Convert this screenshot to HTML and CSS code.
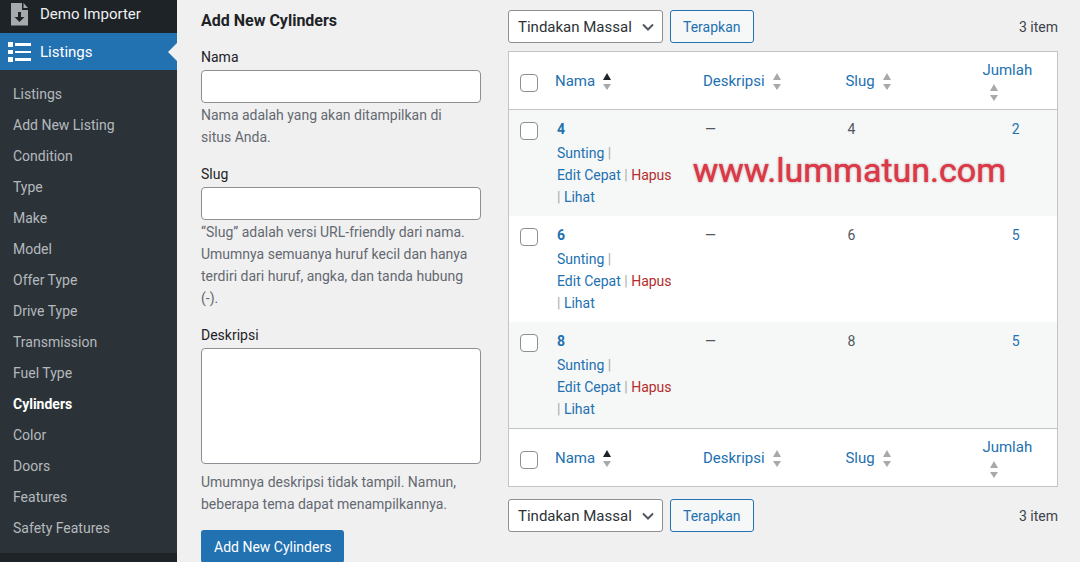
FILE: index.html
```
<!DOCTYPE html>
<html lang="id">
<head>
    <meta charset="UTF-8">
    <title>Cylinders</title>
    <link rel="stylesheet" href="styles.css">
</head>
<body>
<nav class="sidebar">
    <a href="#" class="menu-top">
        <svg class="menu-icon" viewBox="0 0 24 24"><path fill="#a7aaad" d="M3 1h11v7h6v15.500H3zM15.500 1l4.500 5h-4.500z"/><path fill="#1d2327" d="M10 10h3v5h3.500l-5 5-5-5H10z"/></svg>
        Demo Importer
    </a>
    <a href="#" class="menu-top current">
        <svg class="menu-icon" viewBox="0 0 24 24"><path fill="#fff" d="M0 2h5v5H0zM0 10h5v4H0zM0 17h5v5H0zM7 3h16v3H7zM7 11h16v2H7zM7 18h16v3H7z"/></svg>
        Listings
    </a>
    <ul class="submenu">
        <li><a href="#">Listings</a></li>
        <li><a href="#">Add New Listing</a></li>
        <li><a href="#">Condition</a></li>
        <li><a href="#">Type</a></li>
        <li><a href="#">Make</a></li>
        <li><a href="#">Model</a></li>
        <li><a href="#">Offer Type</a></li>
        <li><a href="#">Drive Type</a></li>
        <li><a href="#">Transmission</a></li>
        <li><a href="#">Fuel Type</a></li>
        <li><a href="#" class="active">Cylinders</a></li>
        <li><a href="#">Color</a></li>
        <li><a href="#">Doors</a></li>
        <li><a href="#">Features</a></li>
        <li><a href="#">Safety Features</a></li>
    </ul>
</nav>
<main class="content">
    <form class="add-form">
        <h2>Add New Cylinders</h2>
        <div class="field">
            <label for="tag-name">Nama</label>
            <input type="text" id="tag-name">
            <p>Nama adalah yang akan ditampilkan di situs Anda.</p>
        </div>
        <div class="field">
            <label for="tag-slug">Slug</label>
            <input type="text" id="tag-slug">
            <p>“Slug” adalah versi URL-friendly dari nama. Umumnya semuanya huruf kecil dan hanya terdiri dari huruf, angka, dan tanda hubung (-).</p>
        </div>
        <div class="field">
            <label for="tag-description">Deskripsi</label>
            <textarea id="tag-description"></textarea>
            <p class="after-area">Umumnya deskripsi tidak tampil. Namun, beberapa tema dapat menampilkannya.</p>
        </div>
        <button type="button" class="button-primary">Add New Cylinders</button>
    </form>
    <section class="list">
        <div class="tablenav">
            <div class="select">
                <select aria-label="Tindakan Massal"><option>Tindakan Massal</option></select>
                <svg viewBox="0 0 12 8"><path d="M1 1.500l5 5 5-5"/></svg>
            </div>
            <button type="button" class="button">Terapkan</button>
            <span class="count">3 item</span>
        </div>
        <div class="table-wrap">
            <table>
                <thead>
                    <tr>
                        <th class="check"><input type="checkbox" aria-label="Pilih Semua"></th>
                        <th class="name"><a href="#">Nama<svg class="sort asc" viewBox="0 0 10 18"><path class="up" d="M5 0l4 7H1z"/><path d="M5 17l4-6H1z"/></svg></a></th>
                        <th class="desc"><a href="#">Deskripsi<svg class="sort" viewBox="0 0 10 18"><path class="up" d="M5 0l4 7H1z"/><path d="M5 17l4-6H1z"/></svg></a></th>
                        <th class="slug"><a href="#">Slug<svg class="sort" viewBox="0 0 10 18"><path class="up" d="M5 0l4 7H1z"/><path d="M5 17l4-6H1z"/></svg></a></th>
                        <th><a href="#">Jumlah<svg class="sort" viewBox="0 0 10 18"><path class="up" d="M5 0l4 7H1z"/><path d="M5 17l4-6H1z"/></svg></a></th>
                    </tr>
                </thead>
                <tbody>
                    <tr>
                        <td class="check"><input type="checkbox" aria-label="Pilih 4"></td>
                        <td>
                            <a href="#" class="row-title">4</a>
                            <div class="row-actions"><a href="#">Sunting</a> |<br><a href="#">Edit Cepat</a> | <a href="#" class="delete">Hapus</a><br>| <a href="#">Lihat</a></div>
                        </td>
                        <td>—</td>
                        <td>4</td>
                        <td class="num"><a href="#">2</a></td>
                    </tr>
                    <tr>
                        <td class="check"><input type="checkbox" aria-label="Pilih 6"></td>
                        <td>
                            <a href="#" class="row-title">6</a>
                            <div class="row-actions"><a href="#">Sunting</a> |<br><a href="#">Edit Cepat</a> | <a href="#" class="delete">Hapus</a><br>| <a href="#">Lihat</a></div>
                        </td>
                        <td>—</td>
                        <td>6</td>
                        <td class="num"><a href="#">5</a></td>
                    </tr>
                    <tr>
                        <td class="check"><input type="checkbox" aria-label="Pilih 8"></td>
                        <td>
                            <a href="#" class="row-title">8</a>
                            <div class="row-actions"><a href="#">Sunting</a> |<br><a href="#">Edit Cepat</a> | <a href="#" class="delete">Hapus</a><br>| <a href="#">Lihat</a></div>
                        </td>
                        <td>—</td>
                        <td>8</td>
                        <td class="num"><a href="#">5</a></td>
                    </tr>
                </tbody>
                <tfoot>
                    <tr>
                        <th class="check"><input type="checkbox" aria-label="Pilih Semua"></th>
                        <th><a href="#">Nama<svg class="sort asc" viewBox="0 0 10 18"><path class="up" d="M5 0l4 7H1z"/><path d="M5 17l4-6H1z"/></svg></a></th>
                        <th><a href="#">Deskripsi<svg class="sort" viewBox="0 0 10 18"><path class="up" d="M5 0l4 7H1z"/><path d="M5 17l4-6H1z"/></svg></a></th>
                        <th><a href="#">Slug<svg class="sort" viewBox="0 0 10 18"><path class="up" d="M5 0l4 7H1z"/><path d="M5 17l4-6H1z"/></svg></a></th>
                        <th><a href="#">Jumlah<svg class="sort" viewBox="0 0 10 18"><path class="up" d="M5 0l4 7H1z"/><path d="M5 17l4-6H1z"/></svg></a></th>
                    </tr>
                </tfoot>
            </table>
            <div class="watermark">www.lummatun.com</div>
        </div>
        <div class="tablenav">
            <div class="select">
                <select aria-label="Tindakan Massal"><option>Tindakan Massal</option></select>
                <svg viewBox="0 0 12 8"><path d="M1 1.500l5 5 5-5"/></svg>
            </div>
            <button type="button" class="button">Terapkan</button>
            <span class="count">3 item</span>
        </div>
    </section>
</main>
</body>
</html>
```
FILE: styles.css
```
* {
    box-sizing: border-box;
}
body {
    display: flex;
    margin: 0;
    min-height: 100vh;
    background: #f0f0f0;
    color: #3c434a;
    font: 14px/22px Roboto, sans-serif;
}
a {
    color: #2271b1;
    text-decoration: none;
}
input, select, textarea, button {
    font: inherit;
}

/* sidebar */
.sidebar {
    flex: 0 0 177px;
    background: #1d2327;
}
.menu-top {
    position: relative;
    display: flex;
    align-items: center;
    gap: 8px;
    height: 37px;
    padding: 0 8px;
    color: #f0f0f1;
    font-size: 15px;
}
.menu-top:first-child {
    height: 33px;
    padding-bottom: 6px;
}
.menu-top.current {
    background: #2271b1;
    color: #fff;
}
.menu-top.current::after {
    content: "";
    position: absolute;
    right: 0;
    border: 9px solid transparent;
    border-right-color: #f0f0f0;
    border-left: 0;
}
.menu-icon {
    width: 24px;
    height: 24px;
}
.submenu {
    margin: 0;
    padding: 9px 0;
    background: #2c3338;
    list-style: none;
}
.submenu a {
    display: block;
    padding: 0 13px;
    line-height: 31px;
    color: #b4b9be;
}
.submenu .active {
    color: #fff;
    font-weight: bold;
}

.content {
    flex: 1;
    display: grid;
    grid-template-columns: 28fr 55fr;
    gap: 27px;
    align-items: start;
    padding: 10px 22px 0 24px;
}

/* form */
.add-form h2 {
    margin: 0 0 14px;
    font-size: 16px;
    line-height: 22px;
    color: #1d2327;
}
.field {
    margin-bottom: 15px;
}
.field label {
    display: block;
    margin-bottom: 2px;
    color: #1d2327;
}
.field input, .field textarea {
    display: block;
    width: 100%;
    height: 33px;
    padding: 0 8px;
    border: 1px solid #8c8f94;
    border-radius: 4px;
    background: #fff;
}
.field textarea {
    height: 116px;
    resize: none;
}
.field p {
    margin: 1px 0 0;
    padding-right: 8px;
    color: #646970;
}
.field .after-area {
    margin-top: 7px;
}
.button-primary {
    height: 33px;
    padding: 0 13px;
    border: 0;
    border-radius: 3px;
    background: #2271b1;
    color: #fff;
}

/* list */
.tablenav {
    display: flex;
    align-items: center;
    gap: 7px;
}
.select {
    position: relative;
}
.select select {
    appearance: none;
    width: 155px;
    height: 33px;
    padding: 0 9px;
    border: 1px solid #8c8f94;
    border-radius: 3px;
    background: #fff;
    color: #2c3338;
    font-size: 15px;
}
.select svg {
    position: absolute;
    right: 9px;
    top: 13px;
    width: 12px;
    height: 8px;
    fill: none;
    stroke: #50575e;
    stroke-width: 2;
    pointer-events: none;
}
.button {
    height: 33px;
    padding: 0 12px;
    border: 1px solid #2271b1;
    border-radius: 3px;
    background: #f6f7f7;
    color: #2271b1;
}
.count {
    margin-left: auto;
}
.table-wrap {
    position: relative;
    margin: 8px 0 12px;
}
table {
    width: 100%;
    table-layout: fixed;
    border: 1px solid #c3c4c7;
    border-spacing: 0;
    background: #fff;
}
th {
    height: 58px;
    padding: 0 8px;
    font-size: 15px;
    font-weight: normal;
    text-align: left;
}
thead th {
    border-bottom: 1px solid #c3c4c7;
}
tfoot th {
    border-top: 1px solid #c3c4c7;
}
td {
    padding: 8px 10px;
    vertical-align: top;
    color: #50575e;
}
tbody tr:nth-child(odd) {
    background: #f6f7f7;
}
.name {
    width: 27%;
}
.desc {
    width: 26%;
}
.slug {
    width: 25%;
}
.check {
    width: 38px;
    padding-left: 11px;
    padding-right: 0;
}
.num {
    text-align: center;
}
.check input {
    appearance: none;
    display: block;
    width: 18px;
    height: 18px;
    margin: 4px 0 0;
    border: 1px solid #8c8f94;
    border-radius: 4px;
    background: #fff;
}
.sort {
    width: 10px;
    height: 18px;
    margin-left: 7px;
    vertical-align: middle;
    fill: #a7aaad;
}
.sort.asc .up {
    fill: #1d2327;
}
.row-title {
    font-weight: bold;
}
.row-actions {
    margin-top: 2px;
    color: #a7aaad;
    white-space: nowrap;
}
.row-actions .delete {
    color: #b32d2e;
}
.watermark {
    position: absolute;
    top: 99px;
    right: 52px;
    color: #dc3848;
    font-size: 34px;
    line-height: 40px;
    text-shadow: 0 0 1px #dc3848, 0 0 3px #bbb;
}
```
